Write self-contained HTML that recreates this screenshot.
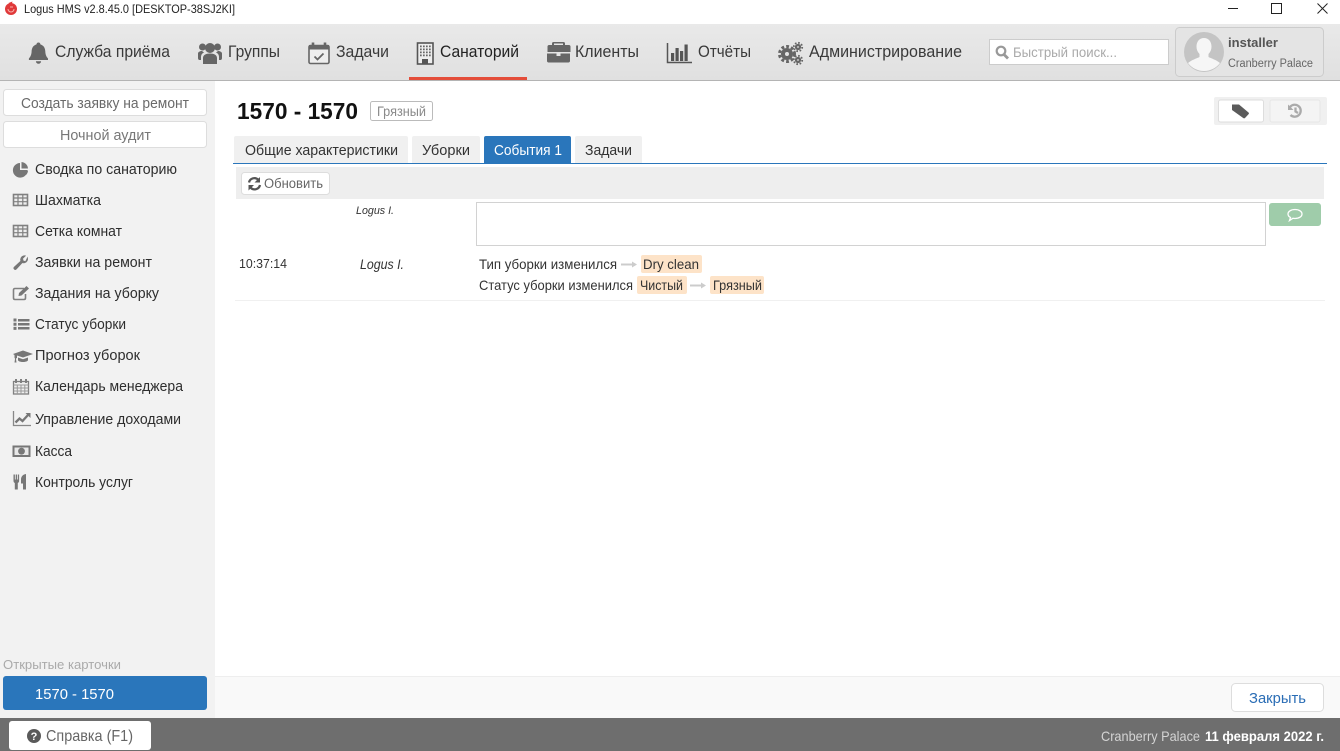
<!DOCTYPE html>
<html lang="ru"><head><meta charset="utf-8"><title>Logus HMS</title>
<style>
html,body{margin:0;padding:0;background:#fff;width:1340px;height:751px;overflow:hidden}
svg{display:block}
text{font-family:"Liberation Sans","DejaVu Sans",sans-serif;font-size:14.5px;fill:#333;white-space:pre}
.nav{font-size:17px;fill:#3a3a3a}
.side{font-size:14.5px;fill:#2e2e2e}
.btn{font-size:14.5px;fill:#6a6a6a}
.ic{fill:#666}
</style></head><body>
<svg xmlns="http://www.w3.org/2000/svg" width="1340" height="751" viewBox="0 0 1340 751">
<defs><linearGradient id="g" x1="0" y1="0" x2="0" y2="1"><stop offset="0" stop-color="#e9e9e9"/><stop offset="1" stop-color="#e0e0e0"/></linearGradient></defs>
<rect width="1340" height="751" fill="#fff"/>
<!-- title bar -->
<circle cx="11" cy="9" r="6" fill="#e0393a"/><path d="M8.500 3 12.500 1.500 11.500 5Z" fill="#e0393a"/><path d="M8 9a3 3 0 0 0 6 0M10 7h3" fill="none" stroke="#f7b0a8" stroke-width="1"/>
<text x="24" y="13" textLength="211" lengthAdjust="spacingAndGlyphs" style="font-size:12px;fill:#222">Logus HMS v2.8.45.0 [DESKTOP-38SJ2KI]</text>
<path d="M1228 8.500h10" stroke="#222" stroke-width="1"/>
<rect x="1271.500" y="3.500" width="10" height="10" fill="none" stroke="#222"/>
<path d="M1317.500 3.500l10 10M1327.500 3.500l-10 10" stroke="#222" stroke-width="1"/>
<!-- nav -->
<rect x="0" y="24" width="1340" height="56" fill="url(#g)"/>
<rect x="0" y="80" width="1340" height="1" fill="#b4b4b4"/>
<rect x="409" y="77" width="118" height="3" fill="#e44d3a"/>
<!-- bell -->
<path class="ic" d="M38.500 42.500c1.200 0 1.800.8 1.900 1.900 3.300 1 4.800 3.800 4.900 7 .1 3.400 1.100 5.300 2.700 7.100v1.500H28.900v-1.500c1.600-1.800 2.600-3.700 2.700-7.100.1-3.200 1.600-6 4.900-7 .1-1.100.7-1.900 2-1.900ZM35.900 61.200h5.200a2.600 2.600 0 0 1-5.200 0Z"/>
<text class="nav" x="55" y="57" textLength="115" lengthAdjust="spacingAndGlyphs">Служба приёма</text>
<!-- users -->
<g class="ic"><circle cx="210" cy="48" r="5"/><circle cx="202.500" cy="47" r="3.500"/><circle cx="217.500" cy="47" r="3.500"/><path d="M203 64v-6c0-3 3-4.500 7-4.500s7 1.500 7 4.500v6ZM198 58v-4.500c0-1.500 2-2.500 4-2.500l2 1.500c-2 .8-3 2.500-3 4.500v3h-1.500c-1 0-1.500-1-1.500-2ZM222 58v-4.500c0-1.500-2-2.500-4-2.500l-2 1.500c2 .8 3 2.500 3 4.500v3h1.500c1 0 1.500-1 1.500-2Z"/></g>
<text class="nav" x="228" y="57" textLength="52" lengthAdjust="spacingAndGlyphs">Группы</text>
<!-- calendar check -->
<rect x="309" y="45.500" width="20" height="18" rx="1.500" fill="#eee" stroke="#666" stroke-width="1.600"/>
<path d="M309 45h20v4.500h-20z" fill="#666"/><path d="M313 42.500v4M325 42.500v4" stroke="#666" stroke-width="2.600"/>
<path d="M314.500 56.500l3 3 6-6" fill="none" stroke="#666" stroke-width="1.800"/>
<text class="nav" x="336" y="57" textLength="53" lengthAdjust="spacingAndGlyphs">Задачи</text>
<!-- building -->
<rect x="417.500" y="43" width="15.500" height="21" fill="#eee" stroke="#555" stroke-width="1.600"/>
<path d="M420 45.500h1.700v1.700H420zM423 45.500h1.700v1.700H423zM426 45.500h1.700v1.700H426zM429 45.500h1.700v1.700H429zM420 48.500h1.700v1.700H420zM423 48.500h1.700v1.700H423zM426 48.500h1.700v1.700H426zM429 48.500h1.700v1.700H429zM420 51.500h1.700v1.700H420zM423 51.500h1.700v1.700H423zM426 51.500h1.700v1.700H426zM429 51.500h1.700v1.700H429zM420 54.500h1.700v1.700H420zM423 54.500h1.700v1.700H423zM426 54.500h1.700v1.700H426zM429 54.500h1.700v1.700H429z" fill="#666"/><rect x="422" y="59" width="6" height="4.500" fill="#555"/>
<text class="nav" x="440" y="57" textLength="79" lengthAdjust="spacingAndGlyphs" style="fill:#222">Санаторий</text>
<!-- briefcase -->
<path class="ic" fill-rule="evenodd" d="M552 45v-1.500c0-1 .7-1.500 1.500-1.500h10c.8 0 1.500.5 1.500 1.500V45h4c.8 0 1.500.7 1.500 1.500V52h-23v-5.500c0-.8.7-1.500 1.500-1.500Zm2 0h9v-1.500h-9ZM547 53.500h9.500V56h4v-2.500H570V61c0 .8-.7 1.500-1.500 1.500h-20c-.8 0-1.500-.7-1.500-1.500Z"/>
<text class="nav" x="575" y="57" textLength="64" lengthAdjust="spacingAndGlyphs">Клиенты</text>
<!-- chart -->
<path d="M667.500 43v19.500H692" fill="none" stroke="#555" stroke-width="1.500"/><path d="M671 53h3.200v8H671zM675.500 48h3.200v13h-3.200zM680 51h3.200v10H680zM684.500 44.500h3.200V61h-3.200z" fill="#555"/>
<text class="nav" x="698" y="57" textLength="53" lengthAdjust="spacingAndGlyphs">Отчёты</text>
<!-- cogs -->
<g fill="none" stroke="#666"><circle cx="787" cy="54" r="4" stroke-width="4"/><circle cx="787" cy="54" r="7.500" stroke-width="3" stroke-dasharray="2.800 2.100"/><circle cx="798" cy="47" r="2" stroke-width="2.200"/><circle cx="798" cy="47" r="4.200" stroke-width="1.800" stroke-dasharray="1.600 1.700"/><circle cx="798" cy="60" r="2" stroke-width="2.200"/><circle cx="798" cy="60" r="4.200" stroke-width="1.800" stroke-dasharray="1.600 1.700"/></g>
<text class="nav" x="809" y="57" textLength="153" lengthAdjust="spacingAndGlyphs">Администрирование</text>
<!-- search -->
<rect x="989.500" y="39.500" width="179" height="25" fill="#fff" stroke="#ccc"/>
<circle cx="1001" cy="51" r="4.300" fill="none" stroke="#999" stroke-width="2.200"/><path d="M1004 54.500l4 4" stroke="#999" stroke-width="2.800"/>
<text x="1013" y="57" textLength="104" lengthAdjust="spacingAndGlyphs" style="font-size:14px;fill:#aaa">Быстрый поиск...</text>
<!-- profile -->
<rect x="1175.500" y="27.500" width="148" height="49" rx="4" fill="#e4e4e4" stroke="#ccc"/>
<circle cx="1204" cy="52" r="20" fill="#c4c4c4"/>
<path d="M1204 38c4.500 0 7.500 3.500 7.500 8.500 0 3-1 5.500-3 7.500v3c3 1.500 8 3 11.500 6a20 20 0 0 1-32 0c3.500-3 8.500-4.500 11.500-6v-3c-2-2-3-4.500-3-7.500 0-5 3-8.500 7.500-8.500Z" fill="#f6f6f6"/>
<text x="1228" y="47" textLength="50" lengthAdjust="spacingAndGlyphs" style="font-size:13px;font-weight:700;fill:#555">installer</text>
<text x="1228" y="67" textLength="85" lengthAdjust="spacingAndGlyphs" style="font-size:11.500px;fill:#666">Cranberry Palace</text>
<!-- sidebar -->
<rect x="0" y="81" width="215" height="637" fill="#f2f2f2"/>
<rect x="3.500" y="89.500" width="203" height="26" rx="3" fill="#fff" stroke="#ddd"/>
<text class="btn" x="21" y="108" textLength="168" lengthAdjust="spacingAndGlyphs">Создать заявку на ремонт</text>
<rect x="3.500" y="121.500" width="203" height="26" rx="3" fill="#fff" stroke="#ddd"/>
<text class="btn" x="60" y="140" textLength="91" lengthAdjust="spacingAndGlyphs" style="fill:#777">Ночной аудит</text>

<path d="M20 162.500v7h7.500a7.300 7.300 0 1 1-7.500-7Zm1.500-1a7 7 0 0 1 6.500 6.500h-6.500ZM21.800 170l6.200.2a7 7 0 0 1-2 4.300Z" fill="#777" transform="translate(0 .5)"/>
<text class="side" x="35" y="174" textLength="142" lengthAdjust="spacingAndGlyphs">Сводка по санаторию</text>
<g fill="#eee" stroke="#808080"><rect x="13.500" y="194.500" width="14" height="11" stroke-width="1.600"/><path d="M13.500 198h14M13.500 201.700h14M18 194.500v11M22.800 194.500v11" fill="none" stroke-width="1.200"/></g>
<text class="side" x="35" y="205" textLength="66" lengthAdjust="spacingAndGlyphs">Шахматка</text>
<g fill="#eee" stroke="#808080"><rect x="13.500" y="225.500" width="14" height="11" stroke-width="1.600"/><path d="M13.500 229h14M13.500 232.700h14M18 225.500v11M22.800 225.500v11" fill="none" stroke-width="1.200"/></g>
<text class="side" x="35" y="236" textLength="87" lengthAdjust="spacingAndGlyphs">Сетка комнат</text>
<path d="M27.500 257.500c.7 2.500-.5 4.700-3 5.300-.8.200-1.600.1-2.200-.1l-6 6.500c-1.300 1.300-3.400-.8-2.100-2.100l6.500-6c-.7-2.600.7-4.600 2.500-5.200.8-.3 1.600-.3 2.300-.1l-2.800 2.800.6 2.300 2.300.6Z" fill="#777" stroke="#777" stroke-width=".6"/>
<text class="side" x="35" y="267" textLength="117" lengthAdjust="spacingAndGlyphs">Заявки на ремонт</text>
<path d="M24 288.500H15c-1 0-1.500.5-1.500 1.500v8c0 1 .5 1.500 1.500 1.500h9c1 0 1.500-.5 1.500-1.500v-4" fill="none" stroke="#808080" stroke-width="1.600"/><path d="M18.500 296l.5-3 7.500-7 2.500 2.500-7.500 7Z" fill="#777"/>
<text class="side" x="35" y="298" textLength="124" lengthAdjust="spacingAndGlyphs">Задания на уборку</text>
<path d="M13.500 318.500h3v3h-3zM13.500 322.700h3v3h-3zM13.500 326.900h3v3h-3zM18 319h11.500v2.500H18zM18 323h11.500v2.500H18zM18 327h11.500v2.500H18z" fill="#777"/>
<text class="side" x="35" y="329" textLength="91" lengthAdjust="spacingAndGlyphs">Статус уборки</text>
<path d="M13 354l10-3.500 10 3.500-10 3.500-6-2v2.500c-.6 0-1 .5-1 1l.5 3.500h-2l.5-3.500c0-.5-.2-1-.5-1.200V355Zm5 3.500 5 1.700 5-1.700v2.500c0 1.200-2.300 2-5 2s-5-.8-5-2Z" fill="#777"/>
<text class="side" x="35" y="360" textLength="105" lengthAdjust="spacingAndGlyphs">Прогноз уборок</text>
<g><rect x="13.500" y="381.500" width="15" height="12.500" fill="#eee" stroke="#808080" stroke-width="1.300"/><path d="M16 379v4M21 379v4M26 379v4" stroke="#808080" stroke-width="2"/><path d="M13.500 385h15M13.500 388h15M13.500 391h15M17.300 385v9M21 385v9M24.800 385v9" stroke="#999" stroke-width="1" fill="none"/></g>
<text class="side" x="35" y="391" textLength="148" lengthAdjust="spacingAndGlyphs">Календарь менеджера</text>
<path d="M13.500 411v14.500h17.500" fill="none" stroke="#888" stroke-width="1.300"/><path d="M15.500 422.500l4-4 3 2.500 5.500-6" fill="none" stroke="#777" stroke-width="2.300"/><path d="M25.500 413h5v5Z" fill="#777"/>
<text class="side" x="35" y="424" textLength="146" lengthAdjust="spacingAndGlyphs">Управление доходами</text>
<rect x="13.500" y="446.500" width="16" height="9.500" fill="#e8e8e8" stroke="#777" stroke-width="2"/><circle cx="21.500" cy="451.200" r="3.400" fill="#777"/>
<text class="side" x="35" y="456" textLength="37" lengthAdjust="spacingAndGlyphs">Касса</text>
<path d="M13.500 475v6.500c0 1 .5 1.500 1.300 2V490h3v-6.500c.8-.5 1.300-1 1.300-2V475h-1.300v5h-.8v-5h-1.300v5h-.8v-5ZM21 480c0-3 1.800-5 5-5.500V490h-3v-6H21Z" fill="#777" transform="translate(0 -.5)"/>
<text class="side" x="35" y="487" textLength="98" lengthAdjust="spacingAndGlyphs">Контроль услуг</text>

<text x="3" y="669" textLength="118" lengthAdjust="spacingAndGlyphs" style="font-size:13px;fill:#aaa">Открытые карточки</text>
<rect x="3" y="676" width="204" height="34" rx="3" fill="#2a76bb"/>
<text x="35" y="699" textLength="79" lengthAdjust="spacingAndGlyphs" style="font-size:15px;fill:#fff">1570 - 1570</text>
<!-- header -->
<text x="237" y="119" textLength="121" lengthAdjust="spacingAndGlyphs" style="font-size:23px;font-weight:700;fill:#111">1570 - 1570</text>
<rect x="370.500" y="101.500" width="62" height="19" rx="2" fill="#fff" stroke="#bbb"/>
<text x="377" y="116" textLength="49" lengthAdjust="spacingAndGlyphs" style="font-size:13.500px;fill:#8a8a8a">Грязный</text>
<rect x="1214" y="97" width="113" height="28" rx="2" fill="#f0f0f0"/>
<rect x="1218.500" y="100" width="45" height="22" rx="2" fill="#fff" stroke="#ddd"/>
<path d="M1232 104.500h7l9.500 8c.6.500.6 1.200 0 1.800l-3.500 3.700c-.6.500-1.200.5-1.800 0l-11.200-8Z" fill="#5b5b5b"/>
<rect x="1270" y="100" width="50" height="22" rx="2" fill="#f4f4f4" stroke="#e6e6e6"/>
<path d="M1290 107a6 6 0 1 1 .5 8M1295.500 107.500v4l2.500 1.500" fill="none" stroke="#aaa" stroke-width="2.300"/><path d="M1288 104.500v5.500h5.500Z" fill="#aaa"/>
<!-- tabs -->
<path d="M234 163v-25a2 2 0 0 1 2-2h170a2 2 0 0 1 2 2v25Z" fill="#f0f0f0"/>
<text x="245" y="155" textLength="153" lengthAdjust="spacingAndGlyphs" style="font-size:15px">Общие характеристики</text>
<path d="M412 163v-25a2 2 0 0 1 2-2h64a2 2 0 0 1 2 2v25Z" fill="#f0f0f0"/>
<text x="422" y="155" textLength="48" lengthAdjust="spacingAndGlyphs" style="font-size:15px">Уборки</text>
<path d="M484 163v-25a2 2 0 0 1 2-2h83a2 2 0 0 1 2 2v25Z" fill="#2a76bb"/>
<text x="494" y="155" textLength="68" lengthAdjust="spacingAndGlyphs" style="font-size:15px;fill:#fff">События 1</text>
<path d="M575 163v-25a2 2 0 0 1 2-2h63a2 2 0 0 1 2 2v25Z" fill="#f0f0f0"/>
<text x="585" y="155" textLength="47" lengthAdjust="spacingAndGlyphs" style="font-size:15px">Задачи</text>
<rect x="233" y="163" width="1094" height="1" fill="#2a76bb"/>
<!-- toolbar -->
<rect x="236" y="167" width="1088" height="32" fill="#eeeeee"/>
<rect x="241.500" y="172.500" width="88" height="22" rx="3" fill="#fff" stroke="#ddd"/>
<path d="M249 182.500a5.500 5.500 0 0 1 9.500-2.500M260 185a5.500 5.500 0 0 1-9.500 2.500" fill="none" stroke="#555" stroke-width="2.300"/><path d="M260 177v5.500h-5.500ZM248.500 190.500V185h5.500Z" fill="#555"/>
<text x="264" y="188" textLength="59" lengthAdjust="spacingAndGlyphs" style="font-size:13.500px;fill:#666">Обновить</text>
<!-- comment -->
<text x="356" y="214" textLength="38" lengthAdjust="spacingAndGlyphs" style="font-size:11px;font-style:italic">Logus I.</text>
<rect x="476.500" y="202.500" width="789" height="43" fill="#fff" stroke="#d2d2d2"/>
<rect x="1269" y="203" width="52" height="23" rx="3" fill="#9fccaa"/>
<path d="M1295 209.500c4 0 7 1.900 7 4.500s-3 4.500-7 4.500c-.8 0-1.500 0-2.200-.2l-3.300 2.200 1-3c-1.600-.8-2.500-2.100-2.500-3.500 0-2.600 3-4.500 7-4.500Z" fill="none" stroke="#fff" stroke-width="1.300"/>
<!-- event -->
<text x="239" y="268" textLength="48" lengthAdjust="spacingAndGlyphs" style="font-size:12.500px">10:37:14</text>
<text x="360" y="269" textLength="44" lengthAdjust="spacingAndGlyphs" style="font-size:14px;font-style:italic">Logus I.</text>
<text x="479" y="269" textLength="138" lengthAdjust="spacingAndGlyphs" style="font-size:14px">Тип уборки изменился</text>
<path d="M621 264.500h12" stroke="#ccc" stroke-width="2"/><path d="M632 261.500l5 3-5 3Z" fill="#ccc"/>
<rect x="641" y="255" width="61" height="18" rx="2" fill="#fde3c8"/>
<text x="643" y="269" textLength="56" lengthAdjust="spacingAndGlyphs" style="font-size:14px">Dry clean</text>
<text x="479" y="290" textLength="154" lengthAdjust="spacingAndGlyphs" style="font-size:14px">Статус уборки изменился</text>
<rect x="637" y="276" width="50" height="18" rx="2" fill="#fde3c8"/>
<text x="640" y="290" textLength="43" lengthAdjust="spacingAndGlyphs" style="font-size:14px">Чистый</text>
<path d="M690 285.500h12" stroke="#ccc" stroke-width="2"/><path d="M701 282.500l5 3-5 3Z" fill="#ccc"/>
<rect x="710" y="276" width="54" height="18" rx="2" fill="#fde3c8"/>
<text x="713" y="290" textLength="49" lengthAdjust="spacingAndGlyphs" style="font-size:14px">Грязный</text>
<rect x="235" y="300" width="1090" height="1" fill="#f0f0f0"/>
<!-- footer -->
<rect x="215" y="676" width="1125" height="42" fill="#f9f9f9"/>
<rect x="215" y="676" width="1125" height="1" fill="#eeeeee"/>
<rect x="1231.500" y="683.500" width="92" height="28" rx="4" fill="#fff" stroke="#ddd"/>
<text x="1249" y="703" textLength="57" lengthAdjust="spacingAndGlyphs" style="font-size:15px;fill:#2a6db5">Закрыть</text>
<!-- bottom -->
<rect x="0" y="718" width="1340" height="33" fill="#6e6e6e"/>
<rect x="9" y="721" width="142" height="29" rx="3" fill="#fff"/>
<circle cx="34" cy="736" r="7" fill="#5a5a5a"/>
<text x="34" y="740" text-anchor="middle" style="font-size:11px;font-weight:700;fill:#fff">?</text>
<text x="46" y="741" textLength="87" lengthAdjust="spacingAndGlyphs" style="font-size:16px;fill:#666">Справка (F1)</text>
<text x="1101" y="741" textLength="99" lengthAdjust="spacingAndGlyphs" style="font-size:14px;fill:#d4d4d4">Cranberry Palace</text>
<text x="1205" y="741" textLength="119" lengthAdjust="spacingAndGlyphs" style="font-size:14px;font-weight:700;fill:#fff">11 февраля 2022 г.</text>
</svg>
</body></html>
